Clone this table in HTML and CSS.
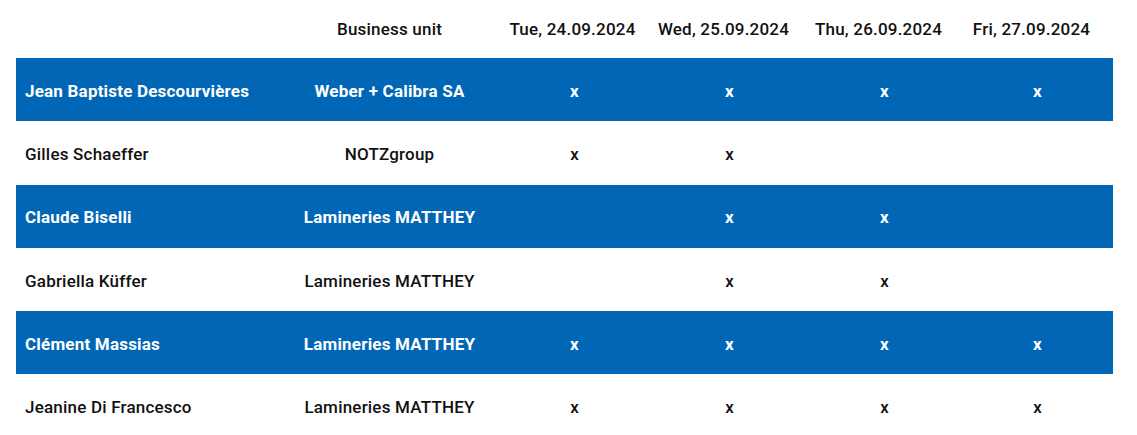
FILE: index.html
```html
<!DOCTYPE html>
<html lang="en">
<head>
<meta charset="utf-8">
<title>Attendance</title>
<link rel="stylesheet" href="styles.css">
</head>
<body>
<table class="plan">
  <colgroup>
    <col class="c-name"><col class="c-unit"><col class="c-day"><col class="c-day"><col class="c-day"><col class="c-day4">
  </colgroup>
  <thead>
    <tr>
      <th></th>
      <th>Business unit</th>
      <th class="day first">Tue, 24.09.2024</th>
      <th class="day">Wed, 25.09.2024</th>
      <th class="day">Thu, 26.09.2024</th>
      <th class="day">Fri, 27.09.2024</th>
    </tr>
  </thead>
  <tbody>
    <tr class="hl"><td class="name">Jean Baptiste Descourvières</td><td>Weber + Calibra SA</td><td>x</td><td>x</td><td>x</td><td>x</td></tr>
    <tr><td class="name">Gilles Schaeffer</td><td>NOTZgroup</td><td>x</td><td>x</td><td></td><td></td></tr>
    <tr class="hl"><td class="name">Claude Biselli</td><td>Lamineries MATTHEY</td><td></td><td>x</td><td>x</td><td></td></tr>
    <tr><td class="name">Gabriella Küffer</td><td>Lamineries MATTHEY</td><td></td><td>x</td><td>x</td><td></td></tr>
    <tr class="hl"><td class="name">Clément Massias</td><td>Lamineries MATTHEY</td><td>x</td><td>x</td><td>x</td><td>x</td></tr>
    <tr><td class="name">Jeanine Di Francesco</td><td>Lamineries MATTHEY</td><td>x</td><td>x</td><td>x</td><td>x</td></tr>
  </tbody>
</table>
</body>
</html>
```
FILE: styles.css
```css
html, body {
  margin: 0;
  padding: 0;
  background: #fff;
}
body {
  font-family: Roboto, "Liberation Sans", sans-serif;
  color: #111;
}
.plan {
  margin: 0 16px;
  width: 1097px;
  border-collapse: collapse;
  table-layout: fixed;
  font-size: 17px;
  letter-spacing: 0.2px;
  font-weight: 500;
}
.c-name { width: 266px; }
.c-unit { width: 215px; }
.c-day { width: 155px; }
.c-day4 { width: 151px; }
.plan th {
  height: 57px;
  padding: 0 0 1px;
  font-weight: 500;
  text-align: center;
  vertical-align: middle;
}
.plan th.day { padding-right: 12px; }
.plan th.day.first { padding-right: 4px; }
.plan td {
  height: 61.3px;
  padding: 2px 0 0;
  text-align: center;
  vertical-align: middle;
}
.plan td.name {
  text-align: left;
  padding-left: 9px;
}
.plan tr.hl td {
  background: #0066b5;
  color: #fff;
  font-weight: 700;
}
```
